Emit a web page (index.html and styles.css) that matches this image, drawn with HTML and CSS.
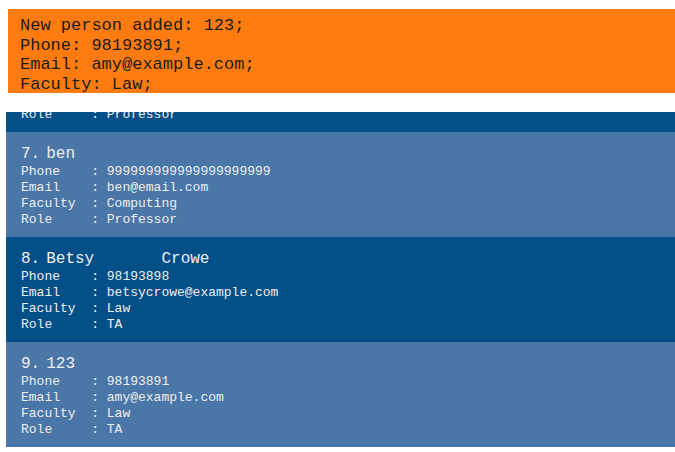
FILE: index.html
```html
<!DOCTYPE html>
<html>
<head>
<meta charset="utf-8">
<link rel="stylesheet" href="styles.css">
</head>
<body>
<div class="result">
  <div>New person added: 123;</div>
  <div>Phone: 98193891;</div>
  <div>Email: amy@example.com;</div>
  <div>Faculty: Law;</div>
  <div>Role: TA;</div>
</div>
<div class="list">
  <div class="list-inner">
    <div class="card dark">
      <div class="title"><span class="id">6.</span><span class="name">alex</span></div>
      <div class="row"><span class="label">Phone</span><span class="sep">:</span><span>87438807</span></div>
      <div class="row"><span class="label">Email</span><span class="sep">:</span><span>alex@example.com</span></div>
      <div class="row"><span class="label">Faculty</span><span class="sep">:</span><span>Computing</span></div>
      <div class="row"><span class="label">Role</span><span class="sep">:</span><span>Professor</span></div>
    </div>
    <div class="card light">
      <div class="title"><span class="id">7.</span><span class="name">ben</span></div>
      <div class="row"><span class="label">Phone</span><span class="sep">:</span><span>999999999999999999999</span></div>
      <div class="row"><span class="label">Email</span><span class="sep">:</span><span>ben@email.com</span></div>
      <div class="row"><span class="label">Faculty</span><span class="sep">:</span><span>Computing</span></div>
      <div class="row"><span class="label">Role</span><span class="sep">:</span><span>Professor</span></div>
    </div>
    <div class="card dark">
      <div class="title"><span class="id">8.</span><span class="name">Betsy       Crowe</span></div>
      <div class="row"><span class="label">Phone</span><span class="sep">:</span><span>98193898</span></div>
      <div class="row"><span class="label">Email</span><span class="sep">:</span><span>betsycrowe@example.com</span></div>
      <div class="row"><span class="label">Faculty</span><span class="sep">:</span><span>Law</span></div>
      <div class="row"><span class="label">Role</span><span class="sep">:</span><span>TA</span></div>
    </div>
    <div class="card light">
      <div class="title"><span class="id">9.</span><span class="name">123</span></div>
      <div class="row"><span class="label">Phone</span><span class="sep">:</span><span>98193891</span></div>
      <div class="row"><span class="label">Email</span><span class="sep">:</span><span>amy@example.com</span></div>
      <div class="row"><span class="label">Faculty</span><span class="sep">:</span><span>Law</span></div>
      <div class="row"><span class="label">Role</span><span class="sep">:</span><span>TA</span></div>
    </div>
  </div>
</div>
</body>
</html>
```
FILE: styles.css
```css
html, body {
  margin: 0;
  padding: 0;
  background: #ffffff;
  overflow: hidden;
}
body {
  font-family: "Liberation Mono", "Courier New", monospace;
}
.result {
  margin: 9px 0 0 8px;
  height: 84px;
  box-sizing: border-box;
  padding: 7px 12px 0;
  background: #fe7b10;
  color: #1c1c1c;
  font-size: 17px;
  line-height: 19.7px;
  overflow: hidden;
}
.list {
  margin: 19px 0 0 6px;
  height: 335px;
  overflow: hidden;
}
.list-inner {
  margin-top: -85px;
}
.card {
  height: 105px;
  box-sizing: border-box;
  padding: 13px 15px 9px;
  color: #eeeeee;
}
.card.dark {
  background: #034f88;
}
.card.light {
  background: #4a77a7;
}
.title {
  font-size: 16px;
  line-height: 19px;
  display: flex;
  white-space: pre;
}
.name {
  margin-left: 6px;
}
.row {
  font-size: 13px;
  line-height: 16px;
  display: flex;
  white-space: pre;
}
.label {
  width: 9ch;
}
.sep {
  width: 2ch;
}
```
